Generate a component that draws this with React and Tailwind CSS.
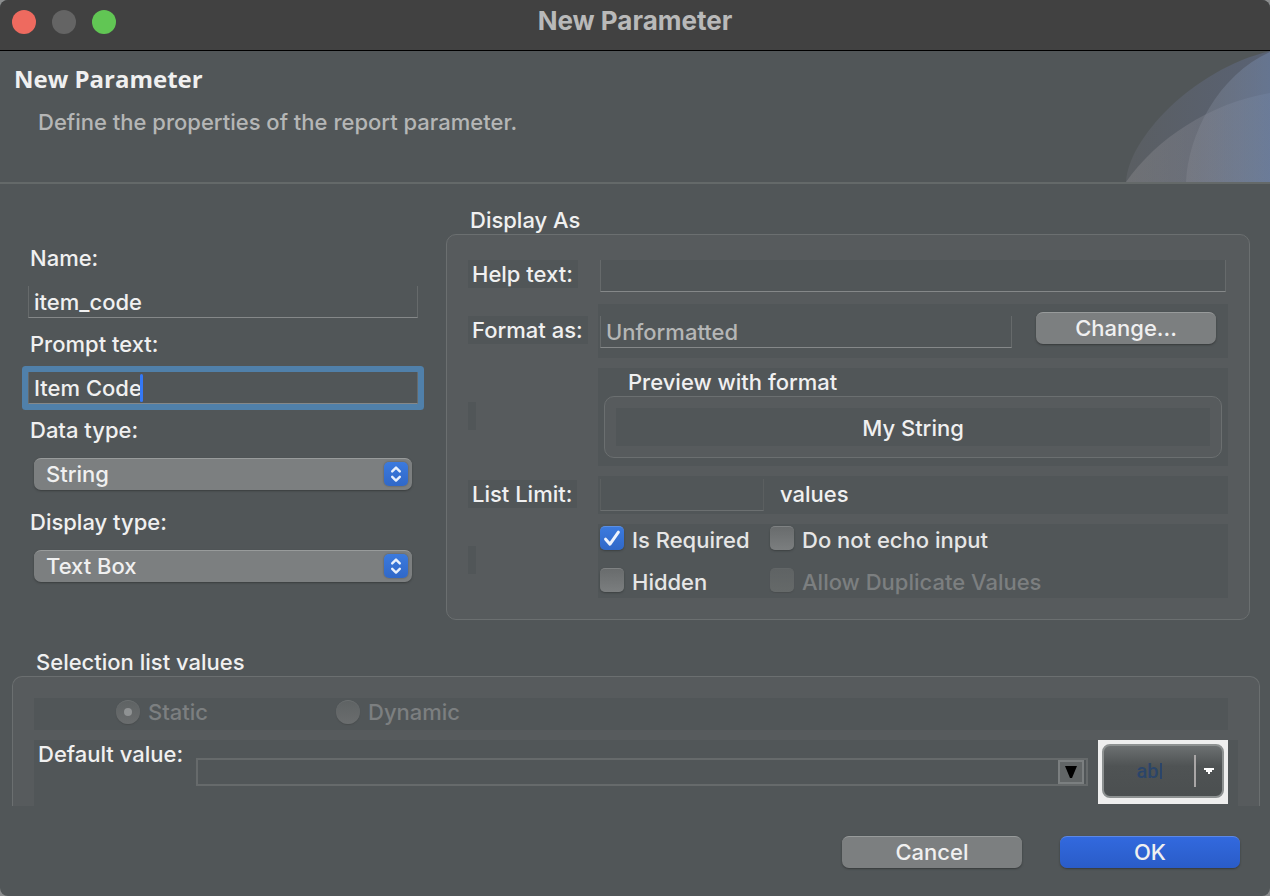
import { useState } from "react";

function TextInput({ className = "", faint, ...props }) {
  const lines = faint ? "border-x-[#5b5f60] border-b-[#6b6f70]" : "border-x-[#666a6b] border-b-[#858889]";
  return (
    <input
      type="text"
      className={`h-8 w-full min-w-0 border-x border-b bg-[#515658] px-[5px] outline-none ${lines} ${className}`}
      {...props}
    />
  );
}

function SelectBox({ id, value, onChange, options }) {
  return (
    <div className="relative mx-1.5">
      <select
        id={id}
        value={value}
        onChange={(e) => onChange(e.target.value)}
        className="block h-8 w-full appearance-none rounded-[7px] border-t border-[#989b9b] bg-[#7c7f80] pr-9 pb-0.5 pl-3 leading-7 text-[#f0f0f0] shadow-[0_1px_2px_#3a3d3e] outline-none"
      >
        {options.map((o) => (
          <option key={o}>{o}</option>
        ))}
      </select>
      <span className="pointer-events-none absolute top-1 right-1 flex size-6 items-center justify-center rounded-[5px] bg-linear-to-b from-[#3b7ade] to-[#3068c8] shadow-[0_0_2px_#4a5058]">
        <svg width="24" height="24" viewBox="0 0 24 24" fill="none" stroke="#e8f0fc" strokeWidth="2.4" strokeLinecap="round" strokeLinejoin="round">
          <path d="M8.2 9.4 12 5.6l3.8 3.8M8.2 14.8 12 18.6l3.8-3.8" />
        </svg>
      </span>
    </div>
  );
}

function Check({ label, disabled, defaultChecked }) {
  return (
    <label className={`flex h-7 items-center gap-2 ${disabled ? "text-[#7c7f80]" : "text-[#e6e6e6]"}`}>
      <span className="grid size-6 shrink-0 -translate-y-0.5">
        <input
          type="checkbox"
          disabled={disabled}
          defaultChecked={defaultChecked}
          className="peer col-start-1 row-start-1 size-6 appearance-none rounded-[5px] border-t border-[#7f8283] bg-linear-to-b from-[#696c6d] to-[#7b7e7f] shadow-[0_1px_2px_#3c4041] checked:border-[#5a8fe4] checked:from-[#3b7ade] checked:to-[#3068c8] disabled:border-[#626667] disabled:from-[#5f6364] disabled:to-[#656969] disabled:shadow-[0_1px_1px_#4a4e4f]"
        />
        <svg className="pointer-events-none invisible col-start-1 row-start-1 peer-checked:visible" width="24" height="24" viewBox="0 0 24 24" fill="none" stroke="#eef3fc" strokeWidth="3" strokeLinecap="round" strokeLinejoin="round">
          <path d="M5.6 13.2 10 18.2 18.4 6.2" />
        </svg>
      </span>
      <span className="whitespace-nowrap">{label}</span>
    </label>
  );
}

function Radio({ label, defaultChecked }) {
  return (
    <label className="flex h-7 w-[220px] items-center gap-2 text-[#7c7f80]">
      <span className="grid size-6 shrink-0">
        <input
          type="radio"
          name="source"
          disabled
          defaultChecked={defaultChecked}
          className="peer col-start-1 row-start-1 size-6 appearance-none rounded-full border-t border-[#6c7071] bg-linear-to-b from-[#5f6364] to-[#6a6d6e] shadow-[0_1px_1px_#484c4d]"
        />
        <span className="invisible col-start-1 row-start-1 size-2 place-self-center rounded-full bg-[#8f9293] peer-checked:visible" />
      </span>
      {label}
    </label>
  );
}

function Row({ label, htmlFor, alignTop, children }) {
  return (
    <div className={`grid grid-cols-[130px_minmax(0,1fr)] ${alignTop ? "items-start" : "items-center"}`}>
      {label ? (
        <label htmlFor={htmlFor} className="mb-0.5 justify-self-start bg-[#515658] pr-[5px] pl-1 whitespace-nowrap">
          {label}
        </label>
      ) : (
        <span className="mb-0.5 h-7 w-2 bg-[#515658]" />
      )}
      {children}
    </div>
  );
}

const button =
  "h-8 w-[180px] shrink-0 rounded-[7px] border-t pb-0.5 leading-7 shadow-[0_1px_2px_#36393a]";

export default function App() {
  const [dataType, setDataType] = useState("String");
  const [displayType, setDisplayType] = useState("Text Box");
  return (
    <div className="bg-[#8b8d8e] font-['Inter','Liberation_Sans',sans-serif] text-[22px] leading-7 font-medium text-[#f0f0f0]">
      <div className="flex min-h-screen flex-col overflow-hidden rounded-lg bg-[#515658]">
        <header className="relative flex h-[51px] items-center justify-center border-b border-black bg-[#414141] pb-2">
          <div className="absolute top-2.5 left-3 flex gap-4">
            <button aria-label="Close" className="size-6 rounded-full bg-[#ee6a5f]" />
            <button aria-label="Minimize" className="size-6 rounded-full bg-[#646464]" />
            <button aria-label="Zoom" className="size-6 rounded-full bg-[#61c654]" />
          </div>
          <h1 className="text-[26px] font-bold text-[#b9b9b9]">New Parameter</h1>
        </header>

        <div className="relative h-[133px] border-b-2 border-[#646969] px-3.5 pt-3.5">
          <h2 className="font-['Open_Sans','Noto_Sans',sans-serif] text-2xl leading-7 font-bold">New Parameter</h2>
          <p className="mt-[15px] pl-6 text-[#b5b6b6]">Define the properties of the report parameter.</p>
          <svg className="absolute right-0 bottom-0" width="144" height="131" viewBox="0 0 144 131">
            <defs>
              <linearGradient id="far" x1="0" x2="1">
                <stop offset="0" stopColor="#5a5e62" />
                <stop offset="1" stopColor="#596274" />
              </linearGradient>
              <linearGradient id="low" x1="0" x2="1">
                <stop offset="0" stopColor="#a09ea0" stopOpacity=".3" />
                <stop offset=".5" stopColor="#94949f" stopOpacity=".28" />
                <stop offset="1" stopColor="#7c8ca8" stopOpacity=".32" />
              </linearGradient>
              <linearGradient id="near" x1="0" x2="1">
                <stop offset="0" stopColor="#8c8e96" stopOpacity=".3" />
                <stop offset="1" stopColor="#7288ac" stopOpacity=".5" />
              </linearGradient>
            </defs>
            <path d="M0 131C2 88 66 19 144 0V131Z" fill="url(#far)" />
            <path d="M0 131C30 88 84 52 144 42V131Z" fill="url(#low)" />
            <path d="M60 131C62 84 92 24 144 1V131Z" fill="url(#near)" />
          </svg>
        </div>

        <main className="flex flex-1 flex-col">
          <div className="flex gap-7 pt-[22px] pr-5 pl-7">
            <div className="w-[390px] shrink-0 pt-[38px]">
              <label htmlFor="name" className="block px-0.5">Name:</label>
              <TextInput id="name" defaultValue="item_code" className="mt-3.5 block" />
              <label htmlFor="prompt" className="mt-3 block px-0.5">Prompt text:</label>
              <div className="relative mt-3.5">
                <TextInput id="prompt" defaultValue="Item Code" className="block rounded-[1px] shadow-[0_0_0_6px_#5080aa]" />
                <span className="absolute top-0.5 left-28 h-7 w-[3px] rounded-full bg-[#3478f6]" />
              </div>
              <label htmlFor="data-type" className="mt-3 mb-3.5 block px-0.5">Data type:</label>
              <SelectBox id="data-type" value={dataType} onChange={setDataType} options={["String", "Integer", "Date", "Boolean"]} />
              <label htmlFor="display-type" className="mt-[18px] mb-3.5 block px-0.5">Display type:</label>
              <SelectBox id="display-type" value={displayType} onChange={setDisplayType} options={["Text Box", "Combo Box", "List Box"]} />
            </div>

            <section className="min-w-0 flex-1">
              <h3 className="pl-6">Display As</h3>
              <div className="flex flex-col gap-2.5 rounded-[10px] border border-[#6b6f70] bg-[#575b5d] px-[21px] pt-[25px] pb-[21px]">
                <Row label="Help text:" htmlFor="help" alignTop>
                  <div className="mb-0.5 px-0.5">
                    <TextInput id="help" className="block" />
                  </div>
                </Row>
                <Row label="Format as:" htmlFor="format">
                  <div className="flex gap-6 bg-[#515658] pt-2 pr-3 pb-2.5 pl-0.5">
                    <TextInput id="format" readOnly defaultValue="Unformatted" className="mt-1 text-[#b5b6b6]" />
                    <button className={`${button} border-[#989b9b] bg-[#7c7f80]`}>Change...</button>
                  </div>
                </Row>
                <Row>
                  <div className="bg-[#515658] px-1.5 pb-2">
                    <h4 className="pl-6">Preview with format</h4>
                    <div className="rounded-[10px] border border-[#6b6f70] bg-[#575b5d] px-[11px] py-[11px]">
                      <p className="bg-[#515658] pt-1.5 pb-1 text-center">My String</p>
                    </div>
                  </div>
                </Row>
                <Row label="List Limit:" htmlFor="limit">
                  <div className="flex h-[38px] items-center gap-4 bg-[#515658] pl-0.5">
                    <TextInput id="limit" disabled faint className="max-w-[164px]" />
                    <span className="mb-0.5">values</span>
                  </div>
                </Row>
                <Row>
                  <div className="grid grid-cols-[170px_minmax(0,1fr)] gap-y-3.5 bg-[#515658] pt-0.5 pb-0.5 pl-0.5">
                    <Check label="Is Required" defaultChecked />
                    <Check label="Do not echo input" />
                    <Check label="Hidden" />
                    <Check label="Allow Duplicate Values" disabled />
                  </div>
                </Row>
              </div>
            </section>
          </div>

          <section className="pt-7 pr-2.5 pl-3">
            <h3 className="pl-6">Selection list values</h3>
            <div className="rounded-t-[10px] border-x border-t border-[#6b6f70] bg-[#575b5d] px-[21px] pt-[21px]">
              <div className="mr-2.5 flex h-8 items-start bg-[#515658] pl-[82px]">
                <Radio label="Static" defaultChecked />
                <Radio label="Dynamic" />
              </div>
              <div className="mt-2.5 flex h-[66px] bg-[#515658] pr-2.5 pl-1">
                <label htmlFor="default-value" className="w-[158px] shrink-0">Default value:</label>
                <div className="mt-[18px] flex h-7 min-w-0 flex-1 border-2 border-[#666a6b]">
                  <input id="default-value" type="text" className="min-w-0 flex-1 bg-transparent px-1 outline-none" />
                  <button aria-label="Show values" className="mr-0.5 flex w-[26px] items-center justify-center border-2 border-[#7b7f80] bg-[#626667]">
                    <svg width="12" height="12" viewBox="0 0 12 12"><path d="M0 0h12L7 12H5Z" fill="#000" /></svg>
                  </button>
                </div>
                <div className="ml-2.5 flex h-16 w-[130px] shrink-0 bg-[#eeeeee] px-1 pt-1 pb-1.5">
                  <button aria-label="Value type" className="flex flex-1 items-center rounded-lg border-2 border-[#8d9191] bg-linear-to-b from-[#6c7071] via-[#4f5354] via-40% to-[#4b4f50]">
                    <span className="flex flex-1 items-center justify-center gap-px font-['Roboto',sans-serif] text-xl text-[#2b4569]">
                      ab
                      <span className="h-4 w-0.5 bg-[#2b4569]" />
                    </span>
                    <span className="h-8 w-0.5 bg-[#a9a6a6]" />
                    <span className="flex w-[26px] justify-center">
                      <svg width="10" height="6" viewBox="0 0 10 6" fill="#fff" shapeRendering="crispEdges"><path d="M0 0h10v2H8v2H6v2H4V4H2V2H0Z" /></svg>
                    </span>
                  </button>
                </div>
              </div>
            </div>
          </section>

          <footer className="mt-auto flex justify-end gap-[38px] px-[30px] pt-[30px] pb-7">
            <button className={`${button} border-[#989b9b] bg-[#7c7f80]`}>Cancel</button>
            <button className={`${button} border-[#5c88e6] bg-linear-to-b from-[#3269de] to-[#2a5cc8]`}>OK</button>
          </footer>
        </main>
      </div>
    </div>
  );
}
